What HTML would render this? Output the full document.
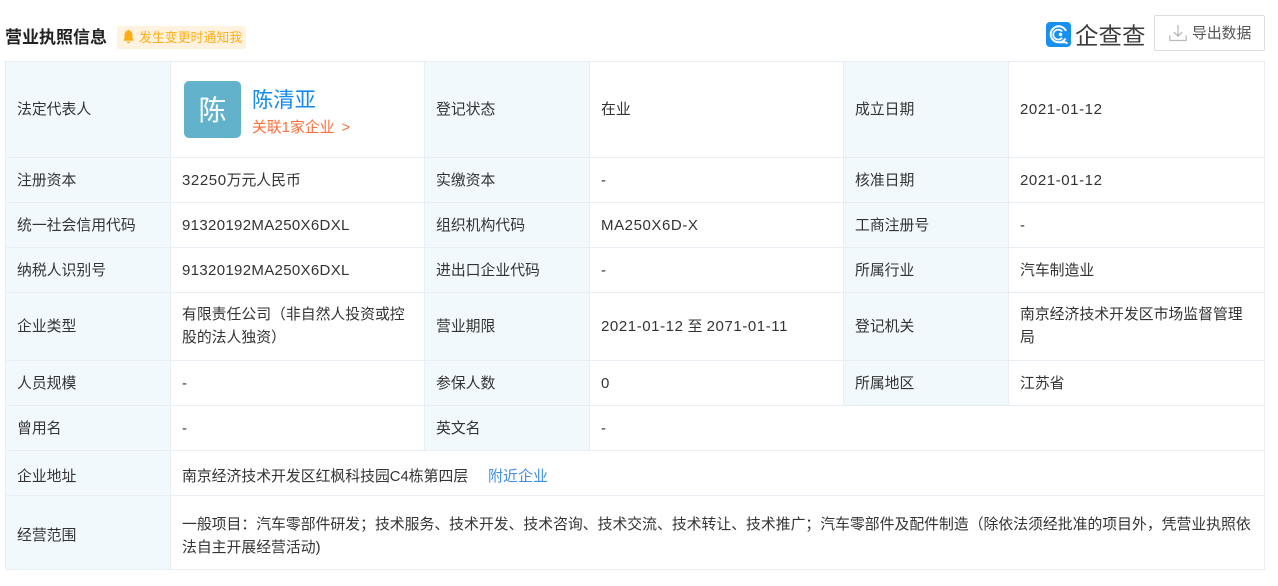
<!DOCTYPE html>
<html><head><meta charset="utf-8"><style>
html,body{margin:0;padding:0;background:#fff;width:1278px;height:586px;overflow:hidden}
body{position:relative;font-family:"Liberation Sans","Noto Sans CJK SC",sans-serif;font-size:14.85px;color:#333}
.a{position:absolute;white-space:nowrap}
.bg{position:absolute;background:#f2f9fc}
.h{position:absolute;background:#e8eef4;height:1px}
.v{position:absolute;background:#e8eef4;width:1px}
.t{position:absolute;white-space:nowrap;line-height:22px;height:22px;margin-top:1px}
.w{position:absolute;white-space:nowrap;line-height:23px;margin-top:1px}
.n{font-size:15px;letter-spacing:.58px}
.c{font-size:15px;letter-spacing:.33px}
</style></head><body>
<div class="a" style="left:5px;top:27px;font-size:17px;font-weight:bold;line-height:22px;color:#222">营业执照信息</div>
<div class="a" style="left:117px;top:26px;width:129px;height:23px;background:#fff3e0;border-radius:2px"></div>
<svg class="a" style="left:122px;top:29px" width="13" height="15" viewBox="0 0 13 15"><path d="M6.5 0.8c.7 0 1.1.4 1.2 1 1.800.5 2.800 2 2.800 4v3.400l1.200 1.900v.7H1.300v-.7l1.200-1.900V5.800c0-2 1-3.500 2.800-4 .1-.6.5-1 1.200-1zM4.900 12.500h3.200c0 1-.7 1.700-1.600 1.700s-1.600-.7-1.600-1.700z" fill="#ffad14"/></svg>
<div class="a" style="left:139px;top:26px;font-size:12.900px;line-height:23px;color:#ffad14">发生变更时通知我</div>

<svg class="a" style="left:1046px;top:22px" width="26" height="26" viewBox="0 0 26 26"><rect width="25" height="25" rx="4" fill="#1890f0"/><path d="M19.500 16.500A8 8 0 1 1 20 9" fill="none" stroke="#fff" stroke-width="2"/><path d="M16.200 9.500a5 5 0 1 0 0 6.200" fill="none" stroke="#fff" stroke-width="1.700"/><circle cx="14.500" cy="12.500" r="1.700" fill="#fff"/><path d="M14 20.500l5.500-.3 2 1.500" fill="none" stroke="#fff" stroke-width="1.800"/></svg>
<div class="a" style="left:1075px;top:19px;font-size:23.500px;line-height:30px;color:#3c3c3c;font-weight:400;font-family:'Noto Sans CJK SC',sans-serif">企查查</div>

<div class="a" style="left:1154px;top:15px;width:109px;height:34px;border:1px solid #ddd;border-radius:2px"></div>
<svg class="a" style="left:1168px;top:23px" width="20" height="20" viewBox="0 0 20 20" fill="none" stroke="#bbb" stroke-width="1.300"><path d="M10 2v11M5.800 9l4.200 4.200L14.200 9M1.800 12.500v5h16.400v-5"/></svg>
<div class="a" style="left:1192px;top:23px;line-height:22px;color:#555">导出数据</div>

<div class="bg" style="left:6px;top:62px;width:164px;height:507px"></div>
<div class="bg" style="left:425px;top:62px;width:164px;height:388px"></div>
<div class="bg" style="left:844px;top:62px;width:164px;height:343px"></div>

<div class="h" style="left:5px;width:1260px;top:61px"></div>
<div class="h" style="left:5px;width:1260px;top:157px"></div>
<div class="h" style="left:5px;width:1260px;top:202px"></div>
<div class="h" style="left:5px;width:1260px;top:247px"></div>
<div class="h" style="left:5px;width:1260px;top:292px"></div>
<div class="h" style="left:5px;width:1260px;top:360px"></div>
<div class="h" style="left:5px;width:1260px;top:405px"></div>
<div class="h" style="left:5px;width:1260px;top:450px"></div>
<div class="h" style="left:5px;width:1260px;top:495px"></div>
<div class="h" style="left:5px;width:1260px;top:569px"></div>

<div class="v" style="left:5px;top:61px;height:509px"></div>
<div class="v" style="left:170px;top:61px;height:509px"></div>
<div class="v" style="left:424px;top:61px;height:390px"></div>
<div class="v" style="left:589px;top:61px;height:390px"></div>
<div class="v" style="left:843px;top:61px;height:345px"></div>
<div class="v" style="left:1008px;top:61px;height:345px"></div>
<div class="v" style="left:1264px;top:61px;height:509px"></div>

<div class="a" style="left:184px;top:81px;width:57px;height:57px;border-radius:5px;background:#62b2cc;color:#fff;font-size:28px;line-height:60px;text-align:center">陈</div>
<div class="a" style="left:252px;top:86px;font-size:21.300px;line-height:28px;color:#128bed">陈清亚</div>
<div class="a" style="left:252px;top:118px;line-height:20px;color:#fd6f3a">关联1家企业<span style="margin-left:7px">&gt;</span></div>

<div class="t" style="left:17px;top:98px">法定代表人</div>
<div class="t" style="left:436px;top:98px">登记状态</div>
<div class="t" style="left:601px;top:98px">在业</div>
<div class="t" style="left:855px;top:98px">成立日期</div>
<div class="t n" style="left:1020px;top:98px">2021-01-12</div>

<div class="t" style="left:17px;top:169px">注册资本</div>
<div class="t" style="left:182px;top:169px"><span class="n">32250</span>万元人民币</div>
<div class="t" style="left:436px;top:169px">实缴资本</div>
<div class="t" style="left:601px;top:169px">-</div>
<div class="t" style="left:855px;top:169px">核准日期</div>
<div class="t n" style="left:1020px;top:169px">2021-01-12</div>

<div class="t" style="left:17px;top:214px">统一社会信用代码</div>
<div class="t c" style="left:182px;top:214px">91320192MA250X6DXL</div>
<div class="t" style="left:436px;top:214px">组织机构代码</div>
<div class="t n" style="left:601px;top:214px">MA250X6D-X</div>
<div class="t" style="left:855px;top:214px">工商注册号</div>
<div class="t" style="left:1020px;top:214px">-</div>

<div class="t" style="left:17px;top:259px">纳税人识别号</div>
<div class="t c" style="left:182px;top:259px">91320192MA250X6DXL</div>
<div class="t" style="left:436px;top:259px">进出口企业代码</div>
<div class="t" style="left:601px;top:259px">-</div>
<div class="t" style="left:855px;top:259px">所属行业</div>
<div class="t" style="left:1020px;top:259px">汽车制造业</div>

<div class="t" style="left:17px;top:315px">企业类型</div>
<div class="w" style="left:182px;top:303px">有限责任公司（非自然人投资或控<br>股的法人独资）</div>
<div class="t" style="left:436px;top:315px">营业期限</div>
<div class="t" style="left:601px;top:315px"><span class="n">2021-01-12</span> 至 <span class="n">2071-01-11</span></div>
<div class="t" style="left:855px;top:315px">登记机关</div>
<div class="w" style="left:1020px;top:303px">南京经济技术开发区市场监督管理<br>局</div>

<div class="t" style="left:17px;top:372px">人员规模</div>
<div class="t" style="left:182px;top:372px">-</div>
<div class="t" style="left:436px;top:372px">参保人数</div>
<div class="t n" style="left:601px;top:372px">0</div>
<div class="t" style="left:855px;top:372px">所属地区</div>
<div class="t" style="left:1020px;top:372px">江苏省</div>

<div class="t" style="left:17px;top:417px">曾用名</div>
<div class="t" style="left:182px;top:417px">-</div>
<div class="t" style="left:436px;top:417px">英文名</div>
<div class="t" style="left:601px;top:417px">-</div>

<div class="t" style="left:17px;top:465px">企业地址</div>
<div class="t" style="left:182px;top:465px">南京经济技术开发区红枫科技园C4栋第四层</div>
<div class="t" style="left:488px;top:465px;color:#3f8fea;font-size:15px">附近企业</div>

<div class="t" style="left:17px;top:524px">经营范围</div>
<div class="w" style="left:182px;top:513px">一般项目：汽车零部件研发；技术服务、技术开发、技术咨询、技术交流、技术转让、技术推广；汽车零部件及配件制造（除依法须经批准的项目外，凭营业执照依<br>法自主开展经营活动)</div>
</body></html>
